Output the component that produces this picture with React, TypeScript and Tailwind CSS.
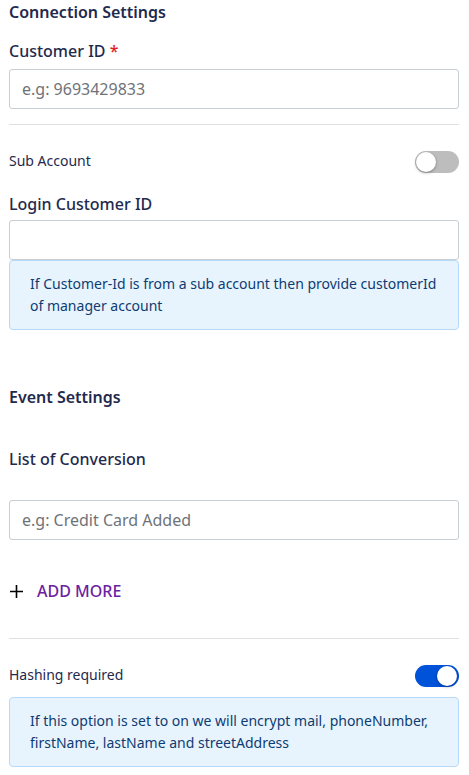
import React, { FC } from "react";

const font = { fontFamily: '"Noto Sans", "Open Sans", sans-serif' };

interface ToggleProps {
  on: boolean;
}

const Toggle: FC<ToggleProps> = ({ on }) => {
  return (
    <div
      className={
        on
          ? "relative w-[44px] h-[22px] rounded-full bg-[#0052d9] flex items-center justify-end px-[2px]"
          : "relative w-[44px] h-[22px] rounded-full bg-[#bdbdbd] flex items-center justify-start px-[1px]"
      }
    >
      <div className="w-[20px] h-[20px] rounded-full bg-white shadow-[0_1px_3px_rgba(0,0,0,0.35)]" />
    </div>
  );
};

const Info: FC<{ children: React.ReactNode; className?: string }> = ({ children, className }) => (
  <div
    className={
      "border border-[#b6d8fb] bg-[#e8f4fd] rounded-[4px] pl-[20px] pr-[12px] py-[12px] text-[14px] leading-[22px] text-[#0d3c73] " +
      (className || "")
    }
  >
    {children}
  </div>
);

export default function App() {
  return (
    <div className="bg-white w-[469px] min-h-[775px] pl-[9px] pr-[10px] text-[#1f2a4d]" style={font}>
      {/* connection */}
      <div className="text-[16px] leading-6 font-semibold">Connection Settings</div>

      <div className="mt-[15px] text-[16px] leading-6 font-medium">
        Customer ID <span className="text-[#e11d2a]">*</span>
      </div>
      <input
        className="mt-[6px] block w-full h-[40px] border border-[#c8ced6] rounded-[3px] px-[12px] text-[16px] placeholder:text-[#6f7378] outline-none"
        placeholder="e.g: 9693429833"
        style={font}
      />

      <div className="mt-[15px] h-px bg-[#e0e0e0]" />

      <div className="mt-[26px] flex items-center justify-between h-[22px]">
        <span className="text-[14px] leading-5 pb-[3px]">Sub Account</span>
        <Toggle on={false} />
      </div>

      <div className="mt-[19px] text-[16px] leading-6 font-medium">Login Customer ID</div>
      <input
        className="mt-1 block w-full h-[40px] border border-[#c8ced6] rounded-[3px] px-[12px] text-[16px] outline-none"
        style={font}
      />
      <Info>If Customer-Id is from a sub account then provide customerId of manager account</Info>

      {/* events */}
      <div className="mt-[55px] text-[16px] leading-6 font-semibold">Event Settings</div>

      <div className="mt-[38px] text-[16px] leading-6 font-medium">List of Conversion</div>
      <input
        className="mt-[29px] block w-full h-[40px] border border-[#c8ced6] rounded-[3px] px-[12px] text-[16px] placeholder:text-[#6f7378] outline-none"
        placeholder="e.g: Credit Card Added"
        style={font}
      />

      <div className="mt-[39px] flex items-center h-6">
        <svg width="15" height="15" viewBox="0 0 15 15" className="mr-[13px]">
          <path d="M7.5 1v13M1 7.5h13" stroke="#000" strokeWidth="1.6" />
        </svg>
        <span className="text-[16px] font-medium text-[#6b22a0] uppercase">Add more</span>
      </div>

      <div className="mt-[35px] h-px bg-[#e0e0e0]" />

      <div className="mt-[26px] flex items-center justify-between h-[22px]">
        <span className="text-[14px] leading-5 pb-[3px]">Hashing required</span>
        <Toggle on={true} />
      </div>
      <Info className="mt-[10px]">
        If this option is set to on we will encrypt mail, phoneNumber, firstName, lastName and streetAddress
      </Info>
    </div>
  );
}
